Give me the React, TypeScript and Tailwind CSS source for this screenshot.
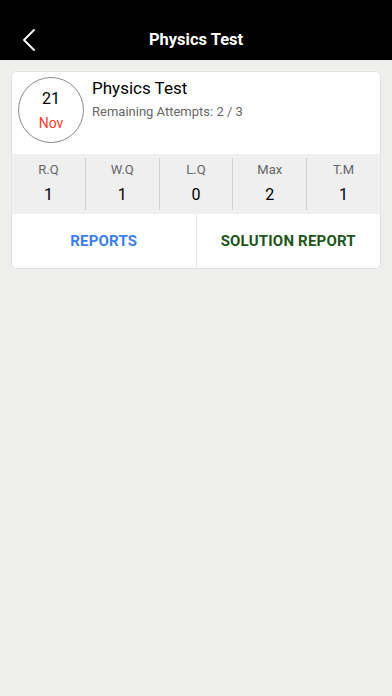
import React from 'react';

const stats = [
  { label: 'R.Q', value: '1' },
  { label: 'W.Q', value: '1' },
  { label: 'L.Q', value: '0' },
  { label: 'Max', value: '2' },
  { label: 'T.M', value: '1' },
];

export default function App() {
  return (
    <div
      className="w-[392px] h-[696px] bg-[#eff0ee] overflow-hidden"
      style={{ fontFamily: 'Roboto, "Liberation Sans", sans-serif' }}
    >
      {/* header */}
      <header className="h-[60px] bg-black flex items-end pb-[8px] relative">
        <div className="w-full flex items-center h-[24px] relative">
          <svg
            className="absolute left-[22px] top-[1px]"
            width="14"
            height="22"
            viewBox="0 0 14 22"
            fill="none"
            stroke="white"
            strokeWidth="1.8"
            strokeLinecap="round"
            strokeLinejoin="round"
          >
            <path d="M12 1 L2 11 L12 21" />
          </svg>
          <h1 className="w-full text-center text-white font-bold text-[16.5px]">Physics Test</h1>
        </div>
      </header>

      {/* card */}
      <div className="mx-[11px] mt-[11px] bg-white rounded-[5px] border border-[#e2e3e1] overflow-hidden">
        <div className="flex items-start pl-[6px] pt-[5px] h-[82px]">
          <div className="w-[66px] h-[66px] rounded-full border border-[#8a8a8a] flex flex-col items-center justify-center shrink-0">
            <span className="text-[16px] text-black leading-none mt-[1px]">21</span>
            <span className="text-[14px] text-[#ff3b30] leading-none mt-[9px]">Nov</span>
          </div>
          <div className="ml-[8px] pt-[1px]">
            <p className="text-[17px] text-black leading-[20px]">Physics Test</p>
            <p className="text-[13px] text-[#666] mt-[4px]">Remaining Attempts: 2 / 3</p>
          </div>
        </div>

        <div className="bg-[#eeefee] flex py-[4px]">
          {stats.map((s, i) => (
            <div
              key={s.label}
              className={`flex-1 flex flex-col items-center h-[52px] ${i < 4 ? 'border-r border-[#cfd0cf]' : ''}`}
            >
              <span className="text-[13px] text-[#666] mt-[3px] leading-[18px]">{s.label}</span>
              <span className="text-[16px] text-black mt-[6px] leading-[20px]">{s.value}</span>
            </div>
          ))}
        </div>

        <div className="flex h-[54px]">
          <button className="flex-1 border-r border-[#e6e6e6] text-[15px] font-bold text-[#3d7ff2] tracking-[0.2px]">
            REPORTS
          </button>
          <button className="flex-1 text-[15px] font-bold text-[#1e5518] tracking-[0.2px]">
            SOLUTION REPORT
          </button>
        </div>
      </div>
    </div>
  );
}
